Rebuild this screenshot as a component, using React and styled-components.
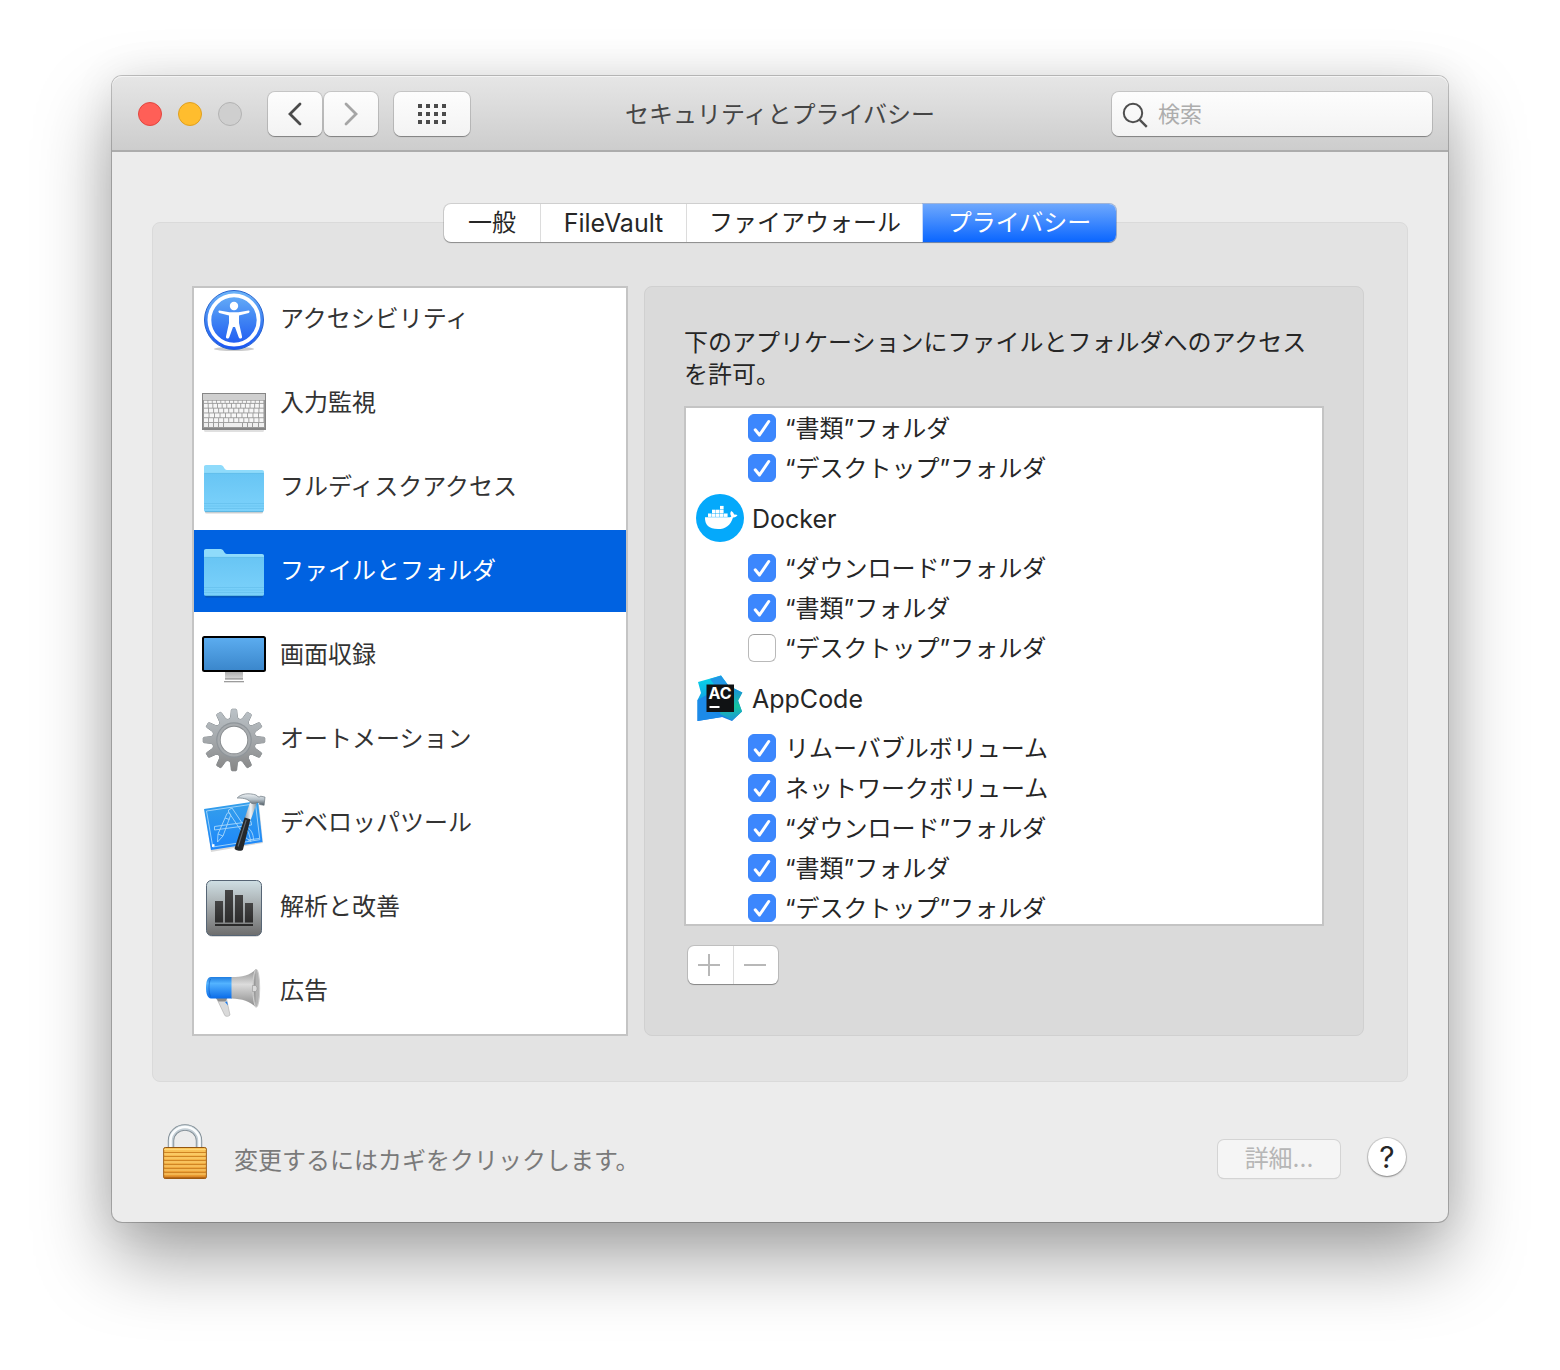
import { useState } from "react";
import styled, { createGlobalStyle, css } from "styled-components";

const GlobalStyle = createGlobalStyle`
  *, *::before, *::after {
    box-sizing: border-box;
  }

  body {
    margin: 0;
    background: #fff;
    color: #262626;
    font-family: Inter, "Noto Sans CJK JP", sans-serif;
    font-size: 24px;
    line-height: 32px;
  }

  button, input {
    font: inherit;
    color: inherit;
  }
`;

const Desktop = styled.main`
  padding: 76px 112px 148px;
`;

const Window = styled.section`
  border-radius: 10px;
  background: #ececec;
  box-shadow: 0 0 0 1px rgba(0, 0, 0, 0.22), 0 36px 76px rgba(0, 0, 0, 0.37),
    0 0 44px rgba(0, 0, 0, 0.08);
`;

const TitleBar = styled.header`
  display: grid;
  grid-template-columns: 1fr auto 1fr;
  align-items: center;
  height: 76px;
  padding: 2px 16px 0;
  border-bottom: 2px solid #acacac;
  border-radius: 10px 10px 0 0;
  background: linear-gradient(#e6e6e6, #cdcdcd);
  box-shadow: inset 0 1px 0 #f4f4f4;
`;

const WindowControls = styled.div`
  display: flex;
  align-items: center;
  gap: 26px;
  padding-left: 10px;
`;

const ControlGroup = styled.div`
  display: flex;
  align-items: center;
  gap: ${({ $gap = 16 }) => $gap}px;
`;

const TrafficLight = styled.button`
  width: 24px;
  height: 24px;
  padding: 0;
  border: 1px solid ${({ $border }) => $border};
  border-radius: 50%;
  background: ${({ $color }) => $color};
`;

const ToolButton = styled.button`
  display: flex;
  align-items: center;
  justify-content: center;
  width: ${({ $wide }) => ($wide ? 76 : 54)}px;
  height: 44px;
  padding: 0;
  border: 0;
  border-radius: 7px;
  background: linear-gradient(#fdfdfd, #f3f3f3);
  box-shadow: 0 0 0 1px rgba(0, 0, 0, 0.12), 0 1px 1px rgba(0, 0, 0, 0.3);
`;

const Title = styled.h1`
  margin: 0;
  padding-top: 2px;
  color: #454545;
  font-size: 24px;
  font-weight: 400;
`;

const SearchField = styled.label`
  display: flex;
  align-items: center;
  justify-self: end;
  gap: 8px;
  width: 320px;
  height: 44px;
  padding: 0 10px;
  border-radius: 7px;
  background: linear-gradient(#fdfdfd, #f3f3f3);
  box-shadow: 0 0 0 1px rgba(0, 0, 0, 0.12), 0 1px 1px rgba(0, 0, 0, 0.3);
`;

const SearchInput = styled.input`
  flex: 1;
  min-width: 0;
  padding: 0;
  border: 0;
  outline: 0;
  background: transparent;
  font-size: 22px;

  &::placeholder {
    color: #adadad;
    opacity: 1;
  }
`;

const Content = styled.div`
  display: flex;
  flex-direction: column;
  padding: 52px 40px 0;
`;

const Tabs = styled.div`
  display: grid;
  grid-template-columns: 96px 146px 237px 193px;
  align-self: center;
  z-index: 1;
  height: 38px;
  margin-bottom: -20px;
  border-radius: 7px;
  background: #fff;
  box-shadow: 0 0 0 1px rgba(0, 0, 0, 0.12), 0 1px 1px rgba(0, 0, 0, 0.3);
`;

const Tab = styled.button`
  padding: 0;
  border: 0;
  background: transparent;

  & + & {
    border-left: 1px solid #dcdcdc;
  }

  &:lang(en) {
    font-size: 25px;
  }

  ${({ $active }) =>
    $active &&
    css`
      && {
        border-left: 0;
      }
      border-radius: 0 7px 7px 0;
      background: linear-gradient(#6ea8fd, #0a66ff);
      box-shadow: 0 0 0 1px rgba(20, 100, 240, 0.25);
      color: #fff;
    `}
`;

const Panel = styled.div`
  display: grid;
  grid-template-columns: 436px 1fr;
  gap: 16px;
  padding: 63px 43px 45px 39px;
  border: 1px solid #dadada;
  border-radius: 8px;
  background: #e3e3e3;
`;

const Sidebar = styled.nav`
  height: 750px;
  overflow: hidden;
  border: 2px solid #c4c4c4;
  background: #fff;
`;

const SidebarList = styled.ul`
  display: flex;
  flex-direction: column;
  gap: 2px;
  margin: -10px 0 0;
  padding: 0;
  list-style: none;
`;

const SidebarButton = styled.button`
  display: flex;
  align-items: center;
  gap: 14px;
  width: 100%;
  height: 82px;
  padding: 2px 8px 0;
  border: 0;
  background: ${({ $active }) => ($active ? "#0062e1" : "transparent")};
  color: ${({ $active }) => ($active ? "#fff" : "#333")};
  text-align: left;

  svg {
    flex: none;
    overflow: visible;
  }

  span {
    padding-bottom: 2px;
  }
`;

const Access = styled.section`
  padding: 40px 39px 39px;
  border: 1px solid #d0d0d0;
  border-radius: 8px;
  background: #dadada;
`;

const AccessText = styled.p`
  margin: 0 0 15px;
`;

const AppList = styled.div`
  height: 520px;
  overflow: hidden;
  border: 2px solid #c4c4c4;
  background: #fff;
`;

const AppHeader = styled.h2`
  display: flex;
  align-items: center;
  gap: 8px;
  height: 60px;
  margin: 0;
  padding-left: 10px;
  font-size: 25px;
  font-weight: 400;
`;

const CheckRow = styled.label`
  display: flex;
  align-items: center;
  gap: 9px;
  height: 40px;
  padding-left: 62px;
`;

const RowText = styled.span`
  padding-top: 2px;
`;

const CheckBox = styled.span`
  display: grid;
  width: 28px;
  height: 28px;

  input, svg {
    grid-area: 1 / 1;
  }

  svg {
    z-index: 1;
    pointer-events: none;
  }
`;

const CheckInput = styled.input`
  appearance: none;
  width: 28px;
  height: 28px;
  margin: 0;
  border: 1px solid #b9b9b9;
  border-top-color: #a0a0a0;
  border-radius: 6px;
  background: #fff;

  &:checked {
    border-color: #3a84fa;
    background: #3c87fd;
  }
`;

const AddRemove = styled.div`
  display: inline-grid;
  grid-template-columns: 45px 45px;
  height: 38px;
  margin: 20px 0 0 4px;
  border-radius: 6px;
  background: #fff;
  box-shadow: 0 0 0 1px rgba(0, 0, 0, 0.12), 0 1px 1px rgba(0, 0, 0, 0.3);
`;

const AddRemoveButton = styled.button`
  display: flex;
  align-items: center;
  justify-content: center;
  padding: 0 3px 0 0;
  border: 0;
  background: transparent;

  & + & {
    border-left: 1px solid #dcdcdc;
  }
`;

const Footer = styled.footer`
  display: flex;
  align-items: center;
  height: 140px;
  padding: 14px 2px 0 10px;
`;

const LockButton = styled.button`
  display: flex;
  margin-right: 26px;
  padding: 0 0 14px;
  border: 0;
  background: transparent;
`;

const FooterText = styled.p`
  flex: 1;
  margin: 0;
  padding-top: 4px;
  color: #7a7a7a;
`;

const DetailsButton = styled.button`
  width: 122px;
  height: 38px;
  margin-right: 28px;
  padding: 0;
  border: 0;
  border-radius: 6px;
  background: #f5f5f5;
  box-shadow: 0 0 0 1px #d4d4d4, 0 1px 1px #c4c4c4;
  color: #b6b6b6;
`;

const HelpButton = styled.button`
  width: 38px;
  height: 38px;
  margin-bottom: 4px;
  padding: 0;
  border: 0;
  border-radius: 50%;
  background: #fff;
  box-shadow: 0 0 0 1px rgba(0, 0, 0, 0.12), 0 1px 2px rgba(0, 0, 0, 0.35);
  font-size: 30px;
`;

function AccessibilityIcon() {
  return (
    <svg width="64" height="64" viewBox="0 0 64 64">
      <defs>
        <linearGradient id="accBlue" x2="0" y2="1">
          <stop offset="0" stopColor="#6db5f8" />
          <stop offset="0.5" stopColor="#3f83f3" />
          <stop offset="1" stopColor="#1a55f2" />
        </linearGradient>
      </defs>
      <ellipse cx="32" cy="61" rx="20" ry="2" fill="#000" opacity="0.2" />
      <circle cx="32" cy="32" r="29.5" fill="url(#accBlue)" stroke="#2763cf" />
      <circle cx="32" cy="32" r="24.6" fill="none" stroke="#fff" strokeWidth="3.8" />
      <circle cx="32" cy="18" r="4.2" fill="#fff" />
      <path
        d="M17.5 22.6 27.5 24.2h9L46.5 22.6c1.3-.1 1.5 2 .2 2.4L37 27.6v7.4l3 13.4c.5 2.300-2.600 3-3.300.8L33 39h-2l-3.700 10.200c-.7 2.200-3.800 1.500-3.300-.8L27 35v-7.400L17.300 25c-1.300-.4-1.100-2.500.2-2.400z"
        fill="#fff"
      />
    </svg>
  );
}

function KeyboardIcon() {
  const rows = [13, 12, 11, 12];
  return (
    <svg width="64" height="64" viewBox="0 0 64 64">
      <rect x="2" y="57" width="60" height="3" rx="1.5" fill="#000" opacity="0.12" />
      <rect x="0.5" y="21.5" width="63" height="36" fill="#999" stroke="#868686" />
      <rect x="1" y="22" width="62" height="6" fill="#cfcfcf" />
      {Array.from({ length: 14 }, (_, i) => (
        <rect key={i} x={2 + i * 4.3} y="28.7" width="3.5" height="2.2" fill="#f6f6f6" />
      ))}
      {rows.map((count, r) => {
        const pitch = 60.4 / count;
        return Array.from({ length: count }, (_, i) => (
          <rect
            key={`${r}-${i}`}
            x={2 + i * pitch}
            y={31.8 + r * 4.8}
            width={pitch - 0.9}
            height="3.9"
            fill="#f6f6f6"
          />
        ));
      })}
      {[[2, 4], [7, 4], [12, 4], [17, 4], [22, 18], [41, 4], [46, 4], [51, 5], [57, 5]].map(([x, w]) => (
        <rect key={x} x={x} y="51" width={w} height="4" fill="#eee" />
      ))}
      <rect x="0" y="56" width="64" height="2" fill="#858585" />
    </svg>
  );
}

function FolderIcon() {
  return (
    <svg width="64" height="64" viewBox="0 0 64 64">
      <defs>
        <linearGradient id="folderFront" x2="0" y2="1">
          <stop offset="0" stopColor="#68c5f4" />
          <stop offset="1" stopColor="#7cd2fb" />
        </linearGradient>
      </defs>
      <rect x="3" y="54" width="58" height="3.5" rx="1.5" fill="#000" opacity="0.18" />
      <path
        d="M2 11c0-1.300.7-2 2-2h14.500c3.500 0 3.500 5 6.500 5H60c1.300 0 2 .7 2 2v10H2z"
        fill="#8fdbfb"
      />
      <path
        d="M2 18.500c0-1 .5-1.500 1.500-1.500h57c1 0 1.500.5 1.500 1.500V54c0 1.300-.7 2-2 2H4c-1.300 0-2-.7-2-2z"
        fill="url(#folderFront)"
      />
      <path d="M2 17.400h60" stroke="#5fbbe8" strokeWidth="0.7" />
      <path d="M2 47.500h60M2 50h60M2 52.500h60" stroke="#5ab8e6" strokeWidth="0.8" opacity="0.6" />
      <path d="M3 55.600h58" stroke="#54acd8" strokeWidth="0.8" />
    </svg>
  );
}

function MonitorIcon() {
  return (
    <svg width="64" height="64" viewBox="0 0 64 64">
      <defs>
        <linearGradient id="screenBlue" x2="0" y2="1">
          <stop offset="0" stopColor="#5cadf0" />
          <stop offset="1" stopColor="#3a86cb" />
        </linearGradient>
        <linearGradient id="standGrey" x2="0" y2="1">
          <stop offset="0" stopColor="#aaa" />
          <stop offset="1" stopColor="#ddd" />
        </linearGradient>
      </defs>
      <rect x="23" y="47" width="18" height="9" fill="url(#standGrey)" />
      <rect x="23" y="54" width="18" height="1.5" fill="#a5a5a5" />
      <rect x="22" y="57" width="20" height="1.3" fill="#9c9c9c" />
      <rect x="1" y="13" width="62" height="34" rx="1.5" fill="url(#screenBlue)" stroke="#000" strokeWidth="2" />
    </svg>
  );
}

// the gradient has to stay vertical, so each tooth is rotated point by point
function toothPath(angle) {
  const a = (angle * Math.PI) / 180;
  return (
    [[27, 12], [28.6, 9], [29.3, 2], [30, 1.2], [34, 1.2], [34.7, 2], [35.4, 9], [37, 12]]
      .map(([x, y], i) => {
        const dx = x - 32;
        const dy = y - 32;
        const px = 32 + dx * Math.cos(a) - dy * Math.sin(a);
        const py = 32 + dx * Math.sin(a) + dy * Math.cos(a);
        return `${i ? "L" : "M"}${px.toFixed(2)} ${py.toFixed(2)}`;
      })
      .join("") + "z"
  );
}

function GearIcon() {
  const teeth = Array.from({ length: 12 }, (_, i) => toothPath(i * 30)).join("");
  return (
    <svg width="64" height="64" viewBox="0 0 64 64">
      <defs>
        <linearGradient id="gearGrey" gradientUnits="userSpaceOnUse" x1="0" y1="0" x2="0" y2="64">
          <stop offset="0" stopColor="#bcc3c8" />
          <stop offset="0.5" stopColor="#a4a8ab" />
          <stop offset="1" stopColor="#858585" />
        </linearGradient>
        <mask id="gearHole">
          <rect width="64" height="64" fill="#fff" />
          <circle cx="32" cy="32" r="13.3" fill="#000" />
        </mask>
      </defs>
      <g mask="url(#gearHole)">
        <path d={teeth} fill="url(#gearGrey)" stroke="#858b8f" strokeWidth="1" />
        <circle cx="32" cy="32" r="21.8" fill="url(#gearGrey)" stroke="#858b8f" strokeWidth="0.6" />
        <path d={teeth} fill="url(#gearGrey)" />
        <circle cx="32" cy="32" r="21.5" fill="url(#gearGrey)" />
        <circle cx="32" cy="32" r="17.8" fill="#8f959a" />
        <circle cx="32" cy="32" r="16.6" fill="#a7abae" />
        <circle cx="32" cy="32" r="14.2" fill="#85898c" />
      </g>
    </svg>
  );
}

function DeveloperIcon() {
  return (
    <svg width="64" height="64" viewBox="0 0 64 64">
      <defs>
        <linearGradient id="blueprint" x2="0" y2="1">
          <stop offset="0" stopColor="#35a0ea" />
          <stop offset="1" stopColor="#1c86fb" />
        </linearGradient>
        <linearGradient id="steel" x2="0" y2="1">
          <stop offset="0" stopColor="#eef2f5" />
          <stop offset="0.5" stopColor="#b4bfc7" />
          <stop offset="1" stopColor="#505b63" />
        </linearGradient>
        <linearGradient id="neck">
          <stop offset="0" stopColor="#8f9aa2" />
          <stop offset="0.5" stopColor="#f2f5f7" />
          <stop offset="1" stopColor="#78838b" />
        </linearGradient>
      </defs>
      <path d="M3 19 57 12l4 39L9 60z" fill="#000" opacity="0.15" />
      <path d="M2 17 56 9l4.500 41L9 58z" fill="url(#blueprint)" />
      <g fill="none" stroke="#a9d8fb" strokeWidth="0.9">
        <path d="M4.500 19 53.500 11.700l4.300 36L10.800 55z" />
        <path d="M26.500 18 30 16l16.500 24.500 2.500 9-5-3.500L26.500 20z" />
        <path d="M25 21.500c2-1.500 4 0 3.500 2L21 44l-5.500 6 .5-8zM16 42l5 2M23 26l4.500 1.500" />
        <path d="M12.500 34.500 49 29.500l.5 3.500L12.500 38z" />
        <path d="M43 34c5 2 8.500 7 8.500 14" />
        <path d="m46 48 11-1.500" />
      </g>
      <path d="m9.800 52.500 2.500-.4.300 2.400-2.500.4z" fill="#fff" />
      <path d="M48.800 8 55.200 10 48.500 28.500l-6-1.800z" fill="url(#neck)" />
      <path
        d="M35.200 6C39 1.500 47 .8 54 3l2 1.700 1.800.3.600-.9 4.600 1-.9 8.200-4.500-.8-.2-1.700-2.700-.4c-1.500 1.800-4.700 1.800-6.400 0C47.300 7.800 43 5.900 35.200 6z"
        fill="url(#steel)"
        stroke="#6e7a82"
        strokeWidth="0.7"
      />
      <path d="M42.600 25.500 48.400 27.200 41 57.500c-.7 2.200-9.200 1.200-8.300-1.500z" fill="#25282b" />
      <path d="M44.200 28 36 54.500" stroke="#62686d" strokeWidth="1.1" />
    </svg>
  );
}

function AnalyticsIcon() {
  return (
    <svg width="64" height="64" viewBox="0 0 64 64">
      <defs>
        <linearGradient id="tileGrey" x2="0" y2="1">
          <stop offset="0" stopColor="#cfdfe4" />
          <stop offset="0.45" stopColor="#a7adaf" />
          <stop offset="1" stopColor="#6d6d6d" />
        </linearGradient>
        <linearGradient id="barDark" x2="0" y2="1">
          <stop offset="0" stopColor="#454545" />
          <stop offset="1" stopColor="#2c2c2c" />
        </linearGradient>
      </defs>
      <rect x="5" y="5" width="54" height="56" rx="5" fill="#000" opacity="0.15" />
      <rect x="4.5" y="4.5" width="55" height="55" rx="5" fill="url(#tileGrey)" stroke="#566575" />
      <g fill="url(#barDark)">
        <rect x="13" y="25" width="8" height="21.5" />
        <rect x="23" y="14" width="8" height="32.5" />
        <rect x="33" y="19" width="8" height="27.5" />
        <rect x="43" y="27" width="8" height="19.5" />
      </g>
      <rect x="13" y="48" width="38" height="2" fill="#2a2a2a" />
    </svg>
  );
}

function MegaphoneIcon() {
  return (
    <svg width="64" height="64" viewBox="0 0 64 64">
      <defs>
        <linearGradient id="megaBlue" x2="0" y2="1">
          <stop offset="0" stopColor="#1f7de0" />
          <stop offset="0.3" stopColor="#53b3ff" />
          <stop offset="1" stopColor="#0a6be8" />
        </linearGradient>
        <linearGradient id="megaGrey" x2="0" y2="1">
          <stop offset="0" stopColor="#8f8f8f" />
          <stop offset="0.4" stopColor="#dcdcdc" />
          <stop offset="1" stopColor="#888" />
        </linearGradient>
      </defs>
      <path d="M14 37h10l1 4 3 14c-1.500 1.700-4 1.700-5.200.5z" fill="#dadada" stroke="#aaa" strokeWidth="0.6" />
      <path d="M13.500 37.500h12l-2 4h-7z" fill="#8d8d8d" />
      <path d="m23 42 2-.5 1 4z" fill="#1c7df0" />
      <path d="M9 17h21v21.500H9C5.500 38 4 34 4 27.500S5.500 17.300 9 17z" fill="url(#megaBlue)" />
      <path d="M8.500 19c-2 4-2 13 0 17.500" fill="none" stroke="#0b59c0" strokeWidth="1" opacity="0.6" />
      <path d="M29.500 17C40 17 48 15.500 54 9c3.500 4 4.500 34 0 38.500C48 41 40 39 29.500 38.500z" fill="url(#megaGrey)" />
      <ellipse cx="54.300" cy="28.200" rx="3.400" ry="19" fill="#b2b2b2" stroke="#cfcfcf" strokeWidth="1" />
      <path d="M53.500 13c-2 6-2 24 0 30z" fill="#979797" />
      <path d="M50.500 25.500h3c2 1 2 5 0 6h-3z" fill="#dadada" stroke="#8b8b8b" strokeWidth="0.5" />
    </svg>
  );
}

function DockerIcon() {
  const boxes = [
    [12, 19.5], [16, 19.5], [20, 19.5], [24, 19.5], [28, 19.5],
    [16, 15.7], [20, 15.7], [24, 15.7],
    [24, 11.9],
  ];
  return (
    <svg width="48" height="48" viewBox="0 0 48 48">
      <circle cx="24" cy="24" r="24" fill="#04a9fb" />
      <g fill="#fff">
        {boxes.map(([x, y]) => (
          <rect key={`${x}-${y}`} x={x} y={y} width="3.6" height="3.4" />
        ))}
        <path d="M9 23.200h24c1.300 0 2-.4 2.300-1-1.400-1.700-1.200-3.800-.1-5.300 1.600.8 2.600 2 2.800 3.600 1.300-.2 2.700 0 3.500.6-.8 1.800-2.400 2.400-4.500 2.300C34.500 31.500 29.500 35 22 35 13 35 8.600 30.500 9 23.200z" />
      </g>
    </svg>
  );
}

function AppCodeIcon() {
  return (
    <svg width="48" height="48" viewBox="0 0 48 48">
      <defs>
        <linearGradient id="acLeft" x2="0" y2="1">
          <stop offset="0" stopColor="#07d8e8" />
          <stop offset="1" stopColor="#1a78e6" />
        </linearGradient>
        <linearGradient id="acRight" x2="0" y2="1">
          <stop offset="0" stopColor="#1d85e6" />
          <stop offset="0.6" stopColor="#16c59f" />
          <stop offset="1" stopColor="#1b95d8" />
        </linearGradient>
      </defs>
      <path d="M2 8 25 1.500 32 11 46 18.500 42 26 46 37.500 36 47 26 43 1.500 47V26L5 19z" fill="url(#acLeft)" />
      <path d="M25 1.500 32 11 28 24 14 5z" fill="#2097e6" />
      <path d="M30 11 46.500 18.500 42 27 46 37.500 36 46.500 24 40z" fill="url(#acRight)" />
      <path d="M1.500 26 16 18v20L26 43 1.500 47z" fill="#1c8ae8" />
      <rect x="10.500" y="10.500" width="27.500" height="27.500" fill="#101214" />
      <text x="12.500" y="25" fill="#fff" fontFamily="Inter, sans-serif" fontSize="16" fontWeight="700">
        AC
      </text>
      <rect x="13.500" y="32" width="10" height="2" fill="#fff" />
    </svg>
  );
}

function LockIcon() {
  return (
    <svg width="46" height="56" viewBox="0 0 46 56">
      <defs>
        <linearGradient id="brass" x2="0" y2="1">
          <stop offset="0" stopColor="#fbc75c" />
          <stop offset="1" stopColor="#e8962c" />
        </linearGradient>
      </defs>
      <path d="M9 25V16.500a14 13 0 0 1 28 0V25" fill="none" stroke="#7d8991" strokeWidth="6.400" />
      <path d="M9 25V16.500a14 13 0 0 1 28 0V25" fill="none" stroke="#c3ced5" strokeWidth="4.800" />
      <path d="M8.500 25V16.500a14.500 13.500 0 0 1 29 0V25" fill="none" stroke="#fafcfd" strokeWidth="2.600" />
      <rect x="1.700" y="23.500" width="42.600" height="31" rx="1.500" fill="url(#brass)" stroke="#94560f" />
      <path
        d="M2 28.500h42M2 32.500h42M2 36.500h42M2 40.500h42M2 44.500h42M2 48.500h42"
        stroke="#d08423"
        strokeWidth="1"
      />
      <path
        d="M2 25.500h42M2 30h42M2 34h42M2 38h42M2 42h42M2 46h42M2 50h42"
        stroke="#ffdc80"
        strokeWidth="1"
        opacity="0.8"
      />
      <path d="M2 53.500h42" stroke="#b86818" strokeWidth="1.500" />
    </svg>
  );
}

const tabs = [
  { name: "一般" },
  { name: "FileVault", lang: "en" },
  { name: "ファイアウォール" },
  { name: "プライバシー" },
];

const services = [
  { name: "アクセシビリティ", Icon: AccessibilityIcon },
  { name: "入力監視", Icon: KeyboardIcon },
  { name: "フルディスクアクセス", Icon: FolderIcon },
  { name: "ファイルとフォルダ", Icon: FolderIcon },
  { name: "画面収録", Icon: MonitorIcon },
  { name: "オートメーション", Icon: GearIcon },
  { name: "デベロッパツール", Icon: DeveloperIcon },
  { name: "解析と改善", Icon: AnalyticsIcon },
  { name: "広告", Icon: MegaphoneIcon },
];

const apps = [
  {
    id: "first",
    items: [
      ["“書類”フォルダ", true],
      ["“デスクトップ”フォルダ", true],
    ],
  },
  {
    id: "docker",
    name: "Docker",
    Icon: DockerIcon,
    items: [
      ["“ダウンロード”フォルダ", true],
      ["“書類”フォルダ", true],
      ["“デスクトップ”フォルダ", false],
    ],
  },
  {
    id: "appcode",
    name: "AppCode",
    Icon: AppCodeIcon,
    items: [
      ["リムーバブルボリューム", true],
      ["ネットワークボリューム", true],
      ["“ダウンロード”フォルダ", true],
      ["“書類”フォルダ", true],
      ["“デスクトップ”フォルダ", true],
    ],
  },
];

function Permission({ label, initial }) {
  const [checked, setChecked] = useState(initial);

  return (
    <CheckRow>
      <CheckBox>
        <CheckInput type="checkbox" checked={checked} onChange={(e) => setChecked(e.target.checked)} />
        {checked && (
          <svg width="28" height="28" viewBox="0 0 28 28">
            <path
              d="m7.200 15.800 4.300 5.200L20.700 7.500"
              fill="none"
              stroke="#fff"
              strokeWidth="3"
              strokeLinecap="round"
              strokeLinejoin="round"
            />
          </svg>
        )}
      </CheckBox>
      <RowText>{label}</RowText>
    </CheckRow>
  );
}

export default function App() {
  const [tab, setTab] = useState("プライバシー");
  const [service, setService] = useState("ファイルとフォルダ");

  return (
    <>
      <GlobalStyle />
      <Desktop lang="ja">
        <Window>
          <TitleBar>
            <WindowControls>
              <ControlGroup>
                <TrafficLight aria-label="閉じる" $color="#ff5f57" $border="#e2463f" />
                <TrafficLight aria-label="しまう" $color="#ffbd2e" $border="#e0a01f" />
                <TrafficLight aria-label="拡大" $color="#cfcfcf" $border="#b3b3b3" disabled />
              </ControlGroup>
              <ControlGroup>
                <ControlGroup $gap={2}>
                  <ToolButton aria-label="戻る">
                    <svg width="28" height="28" viewBox="0 0 28 28" fill="none" stroke="#4b4b4b" strokeWidth="2.800">
                      <path d="M19 4 9 14l10 10" strokeLinecap="round" />
                    </svg>
                  </ToolButton>
                  <ToolButton aria-label="進む">
                    <svg width="28" height="28" viewBox="0 0 28 28" fill="none" stroke="#a5a5a5" strokeWidth="2.800">
                      <path d="m9 4 10 10L9 24" strokeLinecap="round" />
                    </svg>
                  </ToolButton>
                </ControlGroup>
                <ToolButton aria-label="すべてを表示" $wide>
                  <svg width="28" height="20" viewBox="0 0 28 20" fill="#4b4b4b">
                    {[0, 8, 16].map((y) =>
                      [0, 8, 16, 24].map((x) => <rect key={`${x}-${y}`} x={x} y={y} width="4" height="4" />)
                    )}
                  </svg>
                </ToolButton>
              </ControlGroup>
            </WindowControls>
            <Title>セキュリティとプライバシー</Title>
            <SearchField>
              <svg width="28" height="28" viewBox="0 0 28 28" fill="none" stroke="#4f4f4f" strokeWidth="2">
                <circle cx="11" cy="13" r="9.200" />
                <path d="m17.800 19.800 7 7" strokeWidth="2.400" />
              </svg>
              <SearchInput type="search" placeholder="検索" aria-label="検索" />
            </SearchField>
          </TitleBar>

          <Content>
            <Tabs role="tablist">
              {tabs.map(({ name, lang }) => (
                <Tab
                  key={name}
                  role="tab"
                  lang={lang}
                  aria-selected={tab === name}
                  $active={tab === name}
                  onClick={() => setTab(name)}
                >
                  {name}
                </Tab>
              ))}
            </Tabs>

            <Panel>
              <Sidebar>
                <SidebarList>
                  {services.map(({ name, Icon }) => (
                    <li key={name}>
                      <SidebarButton $active={service === name} onClick={() => setService(name)}>
                        <Icon />
                        <span>{name}</span>
                      </SidebarButton>
                    </li>
                  ))}
                </SidebarList>
              </Sidebar>

              <Access>
                <AccessText>下のアプリケーションにファイルとフォルダへのアクセスを許可。</AccessText>
                <AppList>
                  {apps.map(({ id, name, Icon, items }) => (
                    <div key={id}>
                      {name && (
                        <AppHeader>
                          <Icon />
                          <RowText>{name}</RowText>
                        </AppHeader>
                      )}
                      {items.map(([label, on]) => (
                        <Permission key={label} label={label} initial={on} />
                      ))}
                    </div>
                  ))}
                </AppList>
                <AddRemove>
                  <AddRemoveButton aria-label="追加" disabled>
                    <svg width="24" height="24" viewBox="0 0 24 24" stroke="#b8b8b8" strokeWidth="2">
                      <path d="M1 12h22M12 1v22" />
                    </svg>
                  </AddRemoveButton>
                  <AddRemoveButton aria-label="削除" disabled>
                    <svg width="24" height="24" viewBox="0 0 24 24" stroke="#b8b8b8" strokeWidth="2">
                      <path d="M1 12h22" />
                    </svg>
                  </AddRemoveButton>
                </AddRemove>
              </Access>
            </Panel>

            <Footer>
              <LockButton aria-label="カギ">
                <LockIcon />
              </LockButton>
              <FooterText>変更するにはカギをクリックします。</FooterText>
              <DetailsButton disabled>詳細...</DetailsButton>
              <HelpButton aria-label="ヘルプ">?</HelpButton>
            </Footer>
          </Content>
        </Window>
      </Desktop>
    </>
  );
}
